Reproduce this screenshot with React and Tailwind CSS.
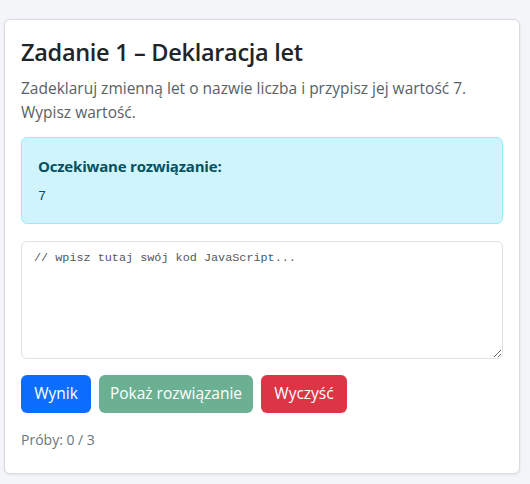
export default function App() {
  return (
    <div className="min-h-[484px] bg-[#f4f5f8] pt-[19px] pl-[4px]" style={{ fontFamily: '"Open Sans", "Noto Sans", sans-serif' }}>
      <div className="w-[516px] h-[455px] bg-white border border-[#d9dbde] rounded-[6px] shadow-[0_1px_3px_rgba(0,0,0,0.08)] p-4">
        {/* Title + task */}
        <h3 className="text-[23.5px] leading-[33.6px] font-semibold text-[#212529] mb-[6px] tracking-[-0.3px]">
          Zadanie 1 – Deklaracja let
        </h3>
        <p className="text-[15.5px] leading-[24px] text-[#595f66] mb-[13px]">
          Zadeklaruj zmienną let o nazwie liczba i przypisz jej wartość 7. Wypisz wartość.
        </p>

        {/* Expected */}
        <div className="bg-[#cff4fc] border border-[#9eeaf9] rounded-[6px] p-4 text-[#055160]">
          <div className="text-[15px] leading-[24px] font-bold mb-[8px] tracking-[-0.2px]">Oczekiwane rozwiązanie:</div>
          <pre className="text-[13.5px] leading-[21px] m-0" style={{ fontFamily: '"Liberation Mono", monospace' }}>7</pre>
        </div>

        {/* Editor */}
        <textarea
          className="mt-[17px] block w-full h-[118px] border border-[#dee2e6] rounded-[6px] px-3 py-[6px] text-[11.8px] leading-[21px] text-[#212529] placeholder:text-[#52585e] outline-none"
          style={{ fontFamily: '"Liberation Mono", monospace' }}
          placeholder="// wpisz tutaj swój kod JavaScript..."
        />

        {/* Buttons */}
        <div className="flex gap-2 mt-[16px]">
          <button className="w-[70px] h-[38px] rounded-[6px] bg-[#0d6efd] text-white text-[15.5px]">Wynik</button>
          <button className="w-[154px] h-[38px] rounded-[6px] bg-[#6bb093] text-white text-[15.5px]">Pokaż rozwiązanie</button>
          <button className="w-[86px] h-[38px] rounded-[6px] bg-[#dc3545] text-white text-[15.5px]">Wyczyść</button>
        </div>

        <div className="mt-4 text-[14px] leading-[21px] text-[#6c757d]">Próby: 0 / 3</div>
      </div>
    </div>
  );
}
